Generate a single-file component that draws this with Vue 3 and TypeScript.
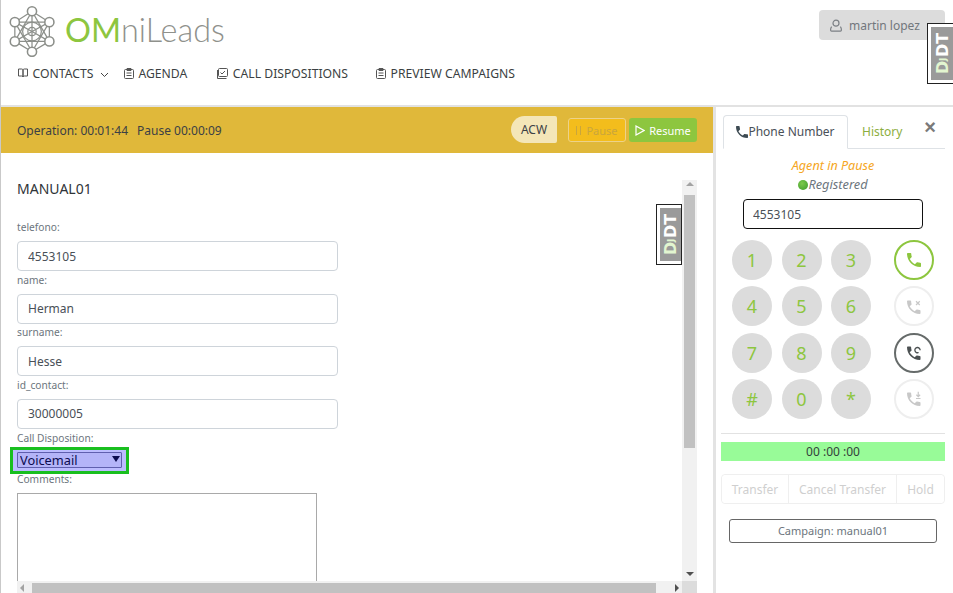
<script setup lang="ts">
const fields = [
  { label: 'telefono:', value: '4553105' },
  { label: 'name:', value: 'Herman' },
  { label: 'surname:', value: 'Hesse' },
  { label: 'id_contact:', value: '30000005' }
]
const keys = ['1', '2', '3', '4', '5', '6', '7', '8', '9', '#', '0', '*']
const phonePath = 'M6.62 10.79c1.44 2.83 3.76 5.14 6.59 6.59l2.2-2.2c.27-.27.67-.36 1.02-.24 1.12.37 2.33.57 3.57.57.55 0 1 .45 1 1V20c0 .55-.45 1-1 1-9.39 0-17-7.61-17-17 0-.55.45-1 1-1h3.5c.55 0 1 .45 1 1 0 1.25.2 2.45.57 3.57.11.35.03.74-.25 1.02l-2.2 2.2z'
const logoNodes = [
  [31, 12], [47.7, 22.5], [47.7, 41], [31, 51], [14.5, 41], [14.5, 22.5]
]
</script>

<template>
  <div class="page">
    <header class="top">
      <div class="brand-row">
        <div class="brand">
          <svg class="logo" width="48" height="52" viewBox="8 6 46 50" fill="none" stroke="#8c8f8a" stroke-width="1.2">
            <line v-for="(a, i) in logoNodes" :key="'s' + i" :x1="a[0]" :y1="a[1]" :x2="logoNodes[(i + 1) % 6][0]" :y2="logoNodes[(i + 1) % 6][1]" />
            <line v-for="(a, i) in logoNodes" :key="'c' + i" x1="31" y1="31.5" :x2="a[0]" :y2="a[1]" />
            <line v-for="(a, i) in logoNodes" :key="'t' + i" :x1="a[0]" :y1="a[1]" :x2="logoNodes[(i + 2) % 6][0]" :y2="logoNodes[(i + 2) % 6][1]" />
            <circle cx="31" cy="31.5" r="9" />
            <circle cx="31" cy="31.5" r="4" />
            <circle v-for="(a, i) in logoNodes" :key="'n' + i" :cx="a[0]" :cy="a[1]" r="4.4" fill="#fff" stroke-width="1.5" />
          </svg>
          <span class="wordmark"><b>OM</b>niLeads</span>
        </div>
        <div class="user">
          <svg width="12" height="13" viewBox="0 0 12 13" fill="none" stroke="#7b7f84" stroke-width="1.2">
            <circle cx="6" cy="4.2" r="3" />
            <path d="M1.6 7.6c-.8 1-1 2-1 3.4 0 .7.4 1.2 1 1.2h8.8c.6 0 1-.5 1-1.2 0-1.4-.2-2.4-1-3.4" />
          </svg>
          <span>martin lopez</span>
        </div>
      </div>
      <nav class="nav">
        <a class="contacts">
          <svg width="10" height="10" viewBox="0 0 10 10" fill="none" stroke="#555" stroke-width="1">
            <path d="M.5 1h3.2c.7 0 1.3.4 1.3 1v7c0-.6-.6-1-1.3-1H.5zM9.5 1H6.3C5.600 1 5 1.400 5 2v7c0-.6.6-1 1.300-1h3.200z" />
          </svg>
          CONTACTS
          <svg class="chev" width="9" height="6" viewBox="0 0 9 6" fill="none" stroke="#444" stroke-width="1"><path d="M1 1l3.5 3.5L8 1" /></svg>
        </a>
        <a class="agenda">
          <svg width="10" height="11" viewBox="0 0 10 11" fill="none" stroke="#555" stroke-width="1">
            <rect x=".5" y="1.5" width="9" height="9" rx="1" /><path d="M3 .5h4v2H3zM2.5 5h5M2.5 7.5h5" />
          </svg>
          AGENDA
        </a>
        <a class="dispositions">
          <svg width="11" height="11" viewBox="0 0 11 11" fill="none" stroke="#555" stroke-width="1">
            <rect x="1.5" y=".5" width="9" height="8" rx="1" /><path d="M.5 2v8.500h9M3.500 4.500l1.500 1.500 3-3" />
          </svg>
          CALL DISPOSITIONS
        </a>
        <a>
          <svg width="10" height="11" viewBox="0 0 10 11" fill="none" stroke="#555" stroke-width="1">
            <rect x=".5" y="1.500" width="9" height="9" rx="1" /><path d="M3 .5h4v2H3zM2.500 5h5M2.500 7.500h5" />
          </svg>
          PREVIEW CAMPAIGNS
        </a>
      </nav>
    </header>

    <main class="main">
      <section class="agent">
        <div class="status-bar">
          <div class="timers">
            <span>Operation: 00:01:44</span>
            <span>Pause 00:00:09</span>
          </div>
          <span class="acw">ACW</span>
          <button class="pause" type="button"><i class="bars"></i>Pause</button>
          <button class="resume" type="button">
            <svg width="10" height="11" viewBox="0 0 10 11" fill="none" stroke="#fff" stroke-width="1.2"><path d="M1 1l8 4.500-8 4.500z" /></svg>
            Resume
          </button>
        </div>

        <div class="scroller">
          <div class="form">
            <h2>MANUAL01</h2>
            <div v-for="f in fields" :key="f.label" class="field">
              <label>{{ f.label }}</label>
              <input type="text" :value="f.value" />
            </div>
            <label class="plain">Call Disposition:</label>
            <div class="select-ring">
              <select>
                <option>Voicemail</option>
              </select>
            </div>
            <label class="plain">Comments:</label>
            <textarea></textarea>
          </div>
          <div class="vbar">
            <i class="arrow up"></i>
            <div class="vthumb"></div>
            <i class="arrow down"></i>
          </div>
          <div class="hbar">
            <i class="arrow left"></i>
            <div class="hthumb"></div>
            <i class="arrow right"></i>
          </div>
          <div class="corner"></div>
        </div>
        <div class="djdt inner"><span><em>D<small>J</small></em>DT</span></div>
      </section>

      <aside class="phone">
        <div class="tabs">
          <div class="tab active">
            <svg width="12" height="12" viewBox="3 3 18 18" fill="#3d4a52"><path :d="phonePath" /></svg>Phone Number
          </div>
          <div class="tab">History</div>
          <span class="close">×</span>
        </div>
        <div class="agent-state">Agent in Pause</div>
        <div class="registered"><i class="dot"></i>Registered</div>
        <input class="dial" type="text" value="4553105" />

        <div class="pad">
          <div class="keys">
            <button v-for="k in keys" :key="k" class="key" type="button">{{ k }}</button>
          </div>
          <div class="actions">
            <button class="act call" type="button">
              <svg width="14" height="14" viewBox="3 3 18 18" fill="#8dc63f"><path :d="phonePath" /></svg>
            </button>
            <button class="act off" type="button">
              <svg width="15" height="15" viewBox="3 1 20 20" fill="#c8c8c8">
                <path :d="phonePath" />
                <path d="M15 4l5 5M20 4l-5 5" stroke="#c8c8c8" stroke-width="1.6" />
              </svg>
            </button>
            <button class="act hold" type="button">
              <svg width="15" height="15" viewBox="3 1 20 20" fill="#4c5152">
                <path :d="phonePath" />
                <path d="M20.500 8a3.500 3.500 0 1 0-2 3" fill="none" stroke="#4c5152" stroke-width="1.800" />
              </svg>
            </button>
            <button class="act off" type="button">
              <svg width="15" height="15" viewBox="3 1 20 20" fill="#c8c8c8">
                <path :d="phonePath" />
                <path d="M18 2v6M15.500 6l2.500 2.500L20.500 6M15 11h6" fill="none" stroke="#c8c8c8" stroke-width="1.600" />
              </svg>
            </button>
          </div>
        </div>

        <div class="timer">00 :00 :00</div>
        <div class="btn-group">
          <button type="button" class="g1">Transfer</button>
          <button type="button" class="g2">Cancel Transfer</button>
          <button type="button" class="g3">Hold</button>
        </div>
        <button class="campaign" type="button">Campaign: manual01</button>
      </aside>
    </main>

    <div class="djdt outer"><span><em>D<small>J</small></em>DT</span></div>
  </div>
</template>

<style>
html, body {
  margin: 0;
  background: #fff;
  overflow: hidden;
}
</style>

<style scoped>
.page {
  position: relative;
  width: 953px;
  height: 593px;
  overflow: hidden;
  font-family: "Noto Sans", "Open Sans", sans-serif;
  color: #495057;
  box-sizing: border-box;
  border-left: 1px solid #c9c9c9;
}
.top {
  height: 105px;
  box-sizing: border-box;
}
.brand-row {
  display: flex;
  justify-content: space-between;
  padding: 6px 8px 0 7px;
  height: 58px;
  box-sizing: border-box;
}
.brand {
  display: flex;
  align-items: center;
  height: 50px;
}
.logo {
  display: block;
}
.wordmark {
  margin: -3px 0 0 9px;
  font-family: Lato, sans-serif;
  font-weight: 300;
  font-size: 32.4px;
  color: #8f918c;
}
.wordmark b {
  font-weight: 400;
  color: #8dc63f;
}
.user {
  display: flex;
  align-items: center;
  gap: 7px;
  width: 126px;
  height: 30px;
  margin-top: 4px;
  padding-left: 11px;
  box-sizing: border-box;
  background: #dcdcdc;
  border-radius: 4px;
  font-size: 12px;
  color: #72777c;
}
.nav {
  display: flex;
  align-items: center;
  padding: 5px 0 0 17px;
  height: 20px;
  font-size: 12.2px;
  color: #3b3f42;
}
.nav a {
  display: flex;
  align-items: center;
  gap: 4.5px;
  white-space: nowrap;
}
.chev {
  margin: 3px 0 0 2px;
}
.contacts {
  margin-right: 15px;
}
.agenda {
  margin-right: 30px;
}
.dispositions {
  margin-right: 28px;
}

.main {
  display: flex;
  height: 488px;
  border-top: 2px solid #e2e2e2;
  box-sizing: border-box;
}
.agent {
  position: relative;
  width: 712px;
  flex: none;
  display: flex;
  flex-direction: column;
  border-right: 3px solid #e3e3e3;
}
.status-bar {
  display: flex;
  align-items: center;
  height: 46px;
  flex: none;
  padding: 0 16px 0 16px;
  background: #e0b83a;
  font-size: 12px;
  color: #3b4045;
}
.timers {
  display: flex;
  gap: 9px;
  flex: 1;
}
.acw {
  display: flex;
  align-items: center;
  justify-content: center;
  width: 46px;
  height: 27px;
  margin: -1px 11px 0 0;
  background: #f4e6b8;
  border-radius: 14px 2px 2px 14px;
  font-size: 12px;
}
.status-bar button {
  height: 24px;
  font: inherit;
  font-size: 11px;
  border-radius: 3px;
  display: flex;
  align-items: center;
  justify-content: center;
  padding: 0;
}
.pause {
  width: 58px;
  margin-right: 3px;
  background: #f3bd1c;
  border: 1px solid #ecd28a;
  color: #c9a63c;
}
.bars {
  width: 3px;
  height: 9px;
  margin-right: 5px;
  border-left: 1px solid #c9a63c;
  border-right: 1px solid #c9a63c;
}
.resume {
  width: 68px;
  gap: 4px;
  background: #8dc63f;
  border: none;
  color: #fff;
}

.scroller {
  display: grid;
  grid-template-columns: 672px 15px;
  grid-template-rows: 401px 12px;
  margin: 27px 0 0 9px;
  flex: none;
}
.form {
  overflow: hidden;
  padding-left: 7px;
  font-size: 10.2px;
}
.form h2 {
  margin: 0 0 22px;
  font-size: 14px;
  font-weight: 400;
  line-height: 18px;
  color: #2f3438;
}
.field label,
.plain {
  display: block;
  height: 14px;
  line-height: 14px;
  color: #6c757d;
}
.field {
  margin-bottom: 1.67px;
}
.field label {
  margin-bottom: 7px;
}
.field input {
  display: block;
  width: 321px;
  height: 30px;
  box-sizing: border-box;
  padding: 0 10px;
  border: 1px solid #ced4da;
  border-radius: 4px;
  font: 12px "Noto Sans", sans-serif;
  color: #495057;
  outline: none;
}
.select-ring {
  position: relative;
  width: 119px;
  height: 27px;
  margin: 2px 0 -2px -7px;
  padding: 0 4px;
  box-sizing: border-box;
  background: #bcbcff;
  border: 3px solid #19bf1f;
  display: flex;
  align-items: center;
}
.select-ring::after {
  content: "";
  position: absolute;
  right: 6px;
  top: 6px;
  border: 4px solid transparent;
  border-top: 6px solid #0c0c50;
  border-bottom: none;
}
.select-ring select {
  appearance: none;
  width: 105px;
  height: 16px;
  padding: 0 0 0 2px;
  border: 1px solid #5f5fae;
  background: #b4b4f8;
  font: 12.8px/14px "Noto Sans", sans-serif;
  color: #0c0c50;
  border-radius: 1px;
  flex: none;
  outline: none;
}
textarea {
  display: block;
  width: 300px;
  height: 120px;
  margin-top: 7px;
  box-sizing: border-box;
  border: 1px solid #a9a9a9;
  resize: none;
  outline: none;
  background: #fff;
}
.vbar {
  position: relative;
  background: #f1f1f1;
}
.vthumb {
  position: absolute;
  left: 2px;
  top: 15px;
  width: 11px;
  height: 253px;
  background: #c1c1c1;
}
.hbar {
  position: relative;
  margin-left: 7px;
  background: #f1f1f1;
}
.hthumb {
  position: absolute;
  left: 15px;
  top: 2px;
  width: 624px;
  height: 10px;
  background: #c1c1c1;
}
.corner {
  background: #dcdcdc;
}
.arrow {
  position: absolute;
  width: 0;
  height: 0;
  border: 4px solid transparent;
}
.arrow.up {
  left: 4px;
  top: 2px;
  border-top: none;
  border-bottom-color: #a3a3a3;
}
.arrow.down {
  left: 4px;
  bottom: 5px;
  border-bottom: none;
  border-top-color: #505050;
}
.arrow.left {
  left: 3px;
  top: 3px;
  border-left: none;
  border-right-color: #a3a3a3;
}
.arrow.right {
  right: 3px;
  top: 3px;
  border-right: none;
  border-left-color: #505050;
}

.djdt {
  position: absolute;
  width: 26px;
  height: 61px;
  box-sizing: border-box;
  border: 1px solid #222;
  background: #fff;
  padding: 3px 0 3px 3px;
}
.djdt span {
  display: flex;
  align-items: center;
  justify-content: center;
  width: 100%;
  height: 100%;
  background: #9a9a9a;
  color: #fff;
  font: 700 16px "DejaVu Sans", sans-serif;
  writing-mode: vertical-rl;
  transform: rotate(180deg);
  white-space: nowrap;
}
.djdt em {
  font-style: normal;
  color: #e2f5d0;
}
.djdt small {
  font-size: 9px;
  margin: 0 1px 0 2px;
}
.djdt.outer {
  left: 926px;
  top: 23px;
  border-right: none;
}
.djdt.inner {
  left: 655px;
  top: 97px;
}

.phone {
  flex: 1;
  min-width: 0;
  box-sizing: border-box;
  padding: 8px 8px 0 5px;
  display: flex;
  flex-direction: column;
  align-items: center;
}
.tabs {
  position: relative;
  display: flex;
  align-self: stretch;
  height: 33px;
  margin: 0 0 0 2px;
  border-bottom: 1px solid #dee2e6;
  box-sizing: content-box;
  font-size: 12px;
}
.tab {
  display: flex;
  align-items: center;
  justify-content: center;
  padding: 0 14px 1px;
  color: #8dae3e;
}
.tab.active {
  width: 125px;
  padding: 0 0 1px;
  box-sizing: border-box;
  height: 34px;
  border: 1px solid #dee2e6;
  border-bottom-color: #fff;
  border-radius: 4px 4px 0 0;
  color: #495057;
  background: #fff;
}
.close {
  position: absolute;
  right: 9px;
  top: -2px;
  font: 700 20px "Liberation Sans", sans-serif;
  line-height: 28px;
  color: #7a7a7a;
}
.agent-state {
  margin-top: 8px;
  font-size: 12.6px;
  line-height: 17px;
  font-style: italic;
  color: #f5a623;
}
.registered {
  display: flex;
  align-items: center;
  margin-top: 2px;
  font-size: 12.8px;
  line-height: 17px;
  font-style: italic;
  color: #6c757d;
}
.dot {
  width: 10px;
  height: 10px;
  border-radius: 50%;
  background: radial-gradient(circle at 40% 35%, #7cc94a, #3d9a2c);
}
.dial {
  width: 180px;
  height: 30px;
  margin-top: 6px;
  padding: 0 9px;
  box-sizing: border-box;
  border: 1px solid #111;
  border-radius: 4px;
  font: 12px "Noto Sans", sans-serif;
  color: #495057;
  outline: none;
  flex: none;
}
.pad {
  display: flex;
  align-self: stretch;
  margin: 11px 0 0 11px;
}
.keys {
  display: grid;
  grid-template-columns: repeat(3, 40px);
  grid-auto-rows: 40px;
  column-gap: 9.500px;
  row-gap: 6.300px;
}
.key {
  padding: 0;
  border: none;
  border-radius: 50%;
  background: #dcdcdc;
  color: #8dc63f;
  font: 18px "Noto Sans", sans-serif;
}
.actions {
  display: flex;
  flex-direction: column;
  gap: 6.300px;
  margin-left: 23px;
}
.act {
  display: flex;
  align-items: center;
  justify-content: center;
  width: 40px;
  height: 40px;
  box-sizing: border-box;
  padding: 0;
  border-radius: 50%;
  background: #fff;
  border: 2px solid #eeeeee;
}
.act.call {
  border-color: #8dc63f;
}
.act.hold {
  border-color: #666b6a;
}
.timer {
  align-self: stretch;
  height: 19px;
  margin-top: 23px;
  border-top: 0;
  position: relative;
  background: #98fb98;
  text-align: center;
  font-size: 12px;
  line-height: 19px;
  color: #33413a;
}
.timer::before {
  content: "";
  position: absolute;
  left: 0;
  right: 0;
  top: -9px;
  height: 1px;
  background: #e2e2e2;
}
.btn-group {
  display: flex;
  align-self: stretch;
  height: 30px;
  margin-top: 13px;
  border: 1px solid #efefef;
  border-radius: 4px;
  box-sizing: border-box;
}
.btn-group button {
  padding: 2px 0 0;
  border: none;
  background: #fff;
  font: 12px "Noto Sans", sans-serif;
  color: #cfcfcf;
  border-radius: 4px;
}
.g1 {
  width: 66px;
}
.g2 {
  width: 109px;
  border-left: 1px solid #efefef !important;
  border-right: 1px solid #efefef !important;
  border-radius: 0 !important;
}
.g3 {
  flex: 1;
}
.campaign {
  width: 208px;
  height: 24px;
  margin-top: 15px;
  padding: 0;
  background: #fff;
  border: 1px solid #666;
  border-radius: 3px;
  font: 11px "Noto Sans", sans-serif;
  color: #6c757d;
  flex: none;
}
</style>
